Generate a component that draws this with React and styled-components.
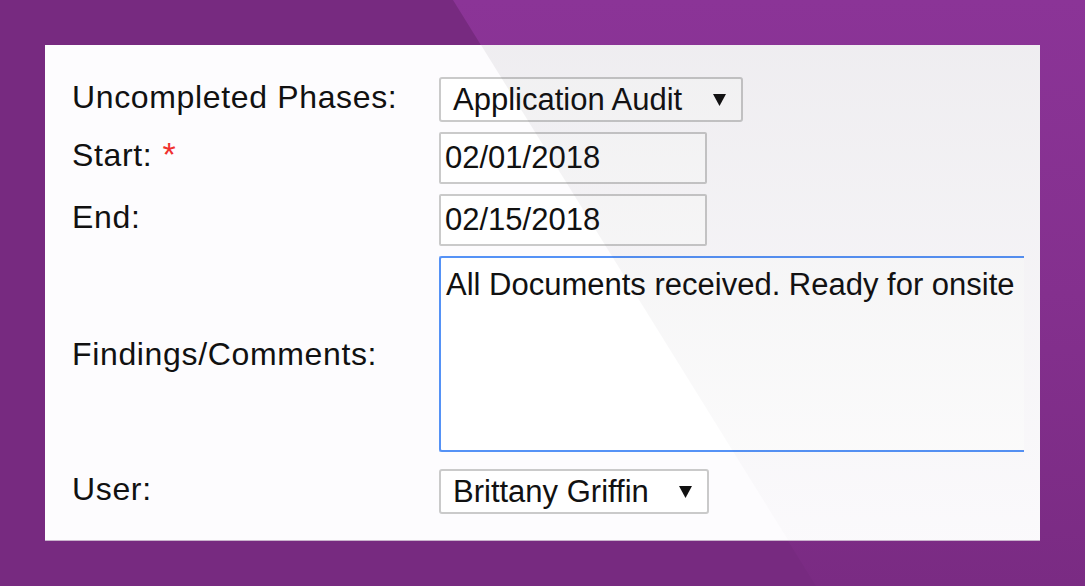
import styled, { createGlobalStyle } from "styled-components";

const Global = createGlobalStyle`
  html, body {
    margin: 0;
    padding: 0;
    height: 100%;
    background: #772a80;
  }
  * { box-sizing: border-box; }
`;

const Page = styled.div`
  position: relative;
  height: 586px;
  padding: 45px;
  overflow: hidden;

  &::before {
    content: "";
    position: absolute;
    inset: 0;
    background: linear-gradient(to bottom, #8b3497 0%, #84308e 50%, #7a2b83 100%);
    clip-path: polygon(453px 0, 100% 0, 100% 100%, 816px 100%);
  }
`;

const Card = styled.div`
  position: relative;
  height: 100%;
  background: #fdfcfe;
  border-bottom: 1px solid #c9b3cc;
  padding: 32px 16px 0 27px;
  font-family: "Liberation Sans", Arial, sans-serif;
  color: #111;

  &::after {
    content: "";
    position: absolute;
    inset: 0;
    pointer-events: none;
    background: linear-gradient(to bottom, rgba(40, 30, 50, 0.065) 0%, rgba(40, 30, 50, 0.035) 55%, rgba(40, 30, 50, 0.012) 100%);
    clip-path: polygon(436px 0, 100% 0, 100% 100%, 743px 100%);
  }
`;

const Form = styled.div`
  display: grid;
  grid-template-columns: 367px 585px;
  row-gap: 10px;
  align-items: center;
`;

const Label = styled.div`
  font-size: 32px;
  letter-spacing: 0.65px;
  padding-bottom: 5px;
  margin-top: ${(p) => p.$nudge || 0}px;
  display: flex;
  align-items: center;
`;

const Required = styled.span`
  color: #f0302e;
  font-size: 34px;
  margin-left: 10px;
  margin-top: -2px;
`;

const Field = styled.div`
  display: flex;
  overflow: hidden;
  margin-top: ${(p) => p.$gap || 0}px;
`;

const SelectBox = styled.div`
  width: ${(p) => p.$width}px;
  height: 45px;
  border: 2px solid #cacaca;
  border-radius: 3px;
  background: #fff;
  display: flex;
  align-items: center;
  justify-content: space-between;
  padding: 0 15px 0 12px;
  font-size: 31px;
`;

const TextInput = styled.input`
  width: 268px;
  height: 52px;
  border: 2px solid #cacaca;
  border-radius: 2px;
  background: #fff;
  padding: 0 4px;
  font-family: "Liberation Sans", Arial, sans-serif;
  font-size: 31px;
  color: #111;
  outline: none;
`;

const Comments = styled.textarea`
  flex: none;
  width: 660px;
  height: 196px;
  border: 2px solid #5592f6;
  border-radius: 3px;
  box-shadow: 0 0 1px 1px rgba(120, 170, 250, 0.5);
  background: #fff;
  padding: 9px 5px;
  font-family: "Liberation Sans", Arial, sans-serif;
  font-size: 31px;
  color: #111;
  resize: none;
  overflow: hidden;
  outline: none;
  white-space: pre;
`;

const Arrow = () => (
  <svg width="13" height="12" viewBox="0 0 13 12">
    <polygon points="0,0 13,0 6.5,12" fill="#111" />
  </svg>
);

export default function App() {
  return (
    <>
      <Global />
      <Page>
        <Card>
          <Form>
            <Label>Uncompleted Phases:</Label>
            <Field>
              <SelectBox $width={304}>
                <span>Application Audit</span>
                <Arrow />
              </SelectBox>
            </Field>

            <Label>
              Start:<Required>*</Required>
            </Label>
            <Field>
              <TextInput readOnly value="02/01/2018" />
            </Field>

            <Label>End:</Label>
            <Field>
              <TextInput readOnly value="02/15/2018" />
            </Field>

            <Label $nudge={6}>Findings/Comments:</Label>
            <Field>
              <Comments readOnly wrap="off" value="All Documents received. Ready for onsite" />
            </Field>

            <Label $nudge={7}>User:</Label>
            <Field $gap={7}>
              <SelectBox $width={270}>
                <span>Brittany Griffin</span>
                <Arrow />
              </SelectBox>
            </Field>
          </Form>
        </Card>
      </Page>
    </>
  );
}
